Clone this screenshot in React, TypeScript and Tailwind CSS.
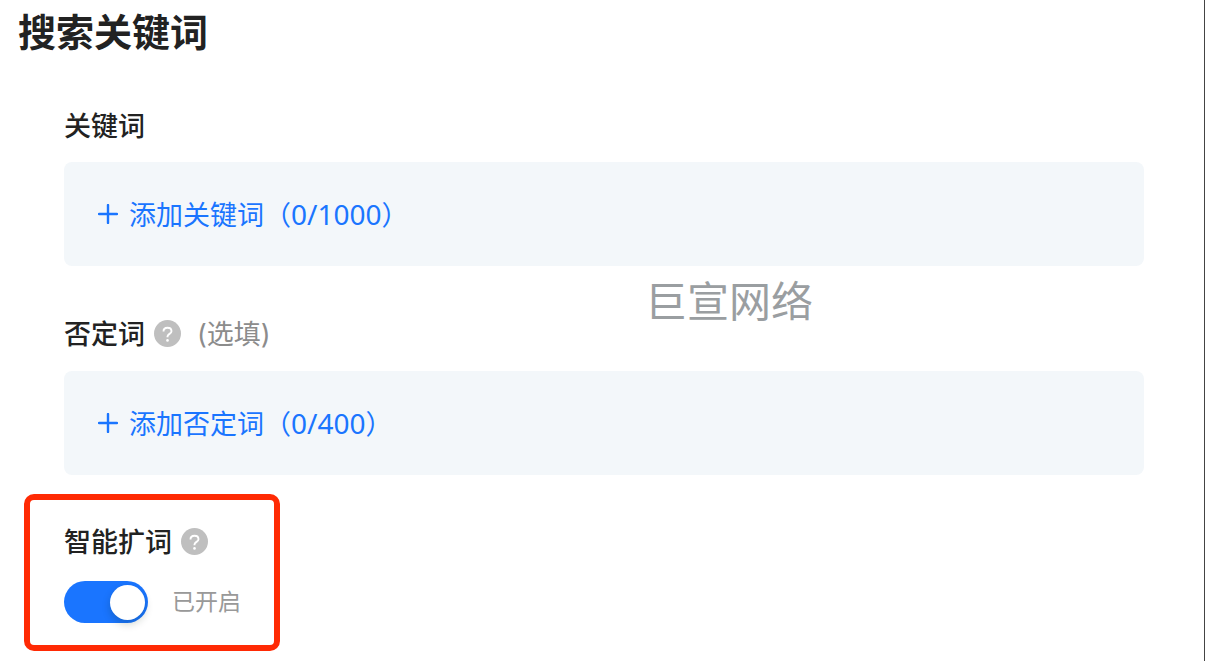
import { useState } from "react";

function PlusIcon() {
  return (
    <svg className="h-5 w-5 shrink-0" viewBox="0 0 20 20" fill="none" aria-hidden="true">
      <path d="M10 1v18M1 10h18" stroke="currentColor" strokeWidth="2.4" strokeLinecap="round" />
    </svg>
  );
}

function HelpButton({ label }: { label: string }) {
  return (
    <button type="button" aria-label={label} className="mb-1 h-[27px] w-[27px] shrink-0">
      <svg className="h-full w-full" viewBox="0 0 27 27" fill="none" aria-hidden="true">
        <circle cx="13.5" cy="13.5" r="13.5" fill="#bfbfbf" />
        <path
          d="M9.5 11.4c0-2.2 1.7-3.6 4-3.6s4 1.4 4 3.4c0 2.6-4 2.8-4 5.4v.7"
          stroke="#fff"
          strokeWidth="1.9"
        />
        <circle cx="13.5" cy="20.4" r="1.3" fill="#fff" />
      </svg>
    </button>
  );
}

function AddPanel({ label, count, max }: { label: string; count: number; max: number }) {
  return (
    <div className="flex h-[104px] items-center rounded-lg bg-[#f3f7fa] px-[34px]">
      <button type="button" className="flex items-center gap-[11px] text-[27px] leading-10 text-[#1a75ff]">
        <PlusIcon />
        <span className="mt-0.5">
          {label}（
          <span className="font-['Noto_Sans',sans-serif] text-[28px]">
            {count}/{max}
          </span>
          ）
        </span>
      </button>
    </div>
  );
}

export default function App() {
  const [expand, setExpand] = useState(true);

  return (
    <main className="relative min-h-screen border-r border-[#444] bg-white pt-2 pb-[10px] font-['Inter','Noto_Sans_CJK_SC',sans-serif] text-[#222]">
      <h1 className="pl-[18px] text-[38px] leading-[48px] font-bold">搜索关键词</h1>

      <section className="mt-[51px] mr-[60px] ml-16">
        <h2 className="mb-[15px] text-[27px] leading-10 font-medium">关键词</h2>
        <AddPanel label="添加关键词" count={0} max={1000} />
      </section>

      <section className="mt-[49px] mr-[60px] ml-16">
        <div className="mb-4 flex items-center text-[27px] leading-10">
          <h2 className="mr-[9px] font-medium">否定词</h2>
          <HelpButton label="否定词说明" />
          <span className="ml-4 text-[#8c8c8c]">(选填)</span>
        </div>
        <AddPanel label="添加否定词" count={0} max={400} />
      </section>

      <section className="mt-[19px] ml-6 w-fit rounded-[10px] border-6 border-[#ff2a04] pt-[23px] pr-[33px] pb-[22px] pl-[34px]">
        <div className="mb-[18px] flex items-center gap-[9px]">
          <h2 id="expand-label" className="text-[27px] leading-10 font-medium">
            智能扩词
          </h2>
          <HelpButton label="智能扩词说明" />
        </div>
        <div className="flex items-center gap-6">
          <button
            type="button"
            role="switch"
            aria-checked={expand}
            aria-labelledby="expand-label"
            onClick={() => setExpand(!expand)}
            className={`flex h-[42px] w-[84px] items-center rounded-full px-[3px] ${
              expand ? "justify-end bg-[#1a75ff]" : "justify-start bg-[#bfbfbf]"
            }`}
          >
            <span className="h-[35px] w-[35px] rounded-full bg-white shadow-[0_4px_8px_rgba(0,35,11,0.2)]" />
          </button>
          <span className="text-[23px] leading-8 text-[#999]">{expand ? "已开启" : "已关闭"}</span>
        </div>
      </section>

      {/* watermark */}
      <div className="pointer-events-none absolute top-[272px] left-[645px] text-[42px] leading-[60px] font-normal text-[#9a9ea1]">
        巨宣网络
      </div>
    </main>
  );
}
